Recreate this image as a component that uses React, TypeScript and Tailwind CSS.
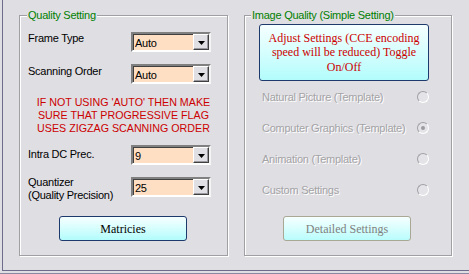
const sans = "font-['Liberation_Sans',Arial,sans-serif] text-[11px] tracking-[-0.25px]";
const serif = "font-['Liberation_Serif','Times_New_Roman',serif] text-[12px]";

const Combo = ({ value }: { value: string }) => (
  <div className="w-[80px] h-[20px] border-2 border-t-[#808080] border-l-[#808080] border-b-white border-r-[#f4f4f4] shadow-[inset_1px_1px_0_#404040] bg-[#ffdfc3] flex">
    <div className={`${sans} flex-1 pl-[2px] pt-[3px] leading-[13px] text-black`}>{value}</div>
    <div className="w-[16px] h-[16px] bg-[#e0dfe3] border border-t-white border-l-white border-b-[#404040] border-r-[#404040] shadow-[inset_-1px_-1px_0_#9a99a0] flex items-center justify-center">
      <svg width="7" height="4" viewBox="0 0 7 4" className="mt-[1px]">
        <path d="M0 0H7L3.5 4Z" fill="#000" />
      </svg>
    </div>
  </div>
);

const Row = ({ label, value, pt }: { label: React.ReactNode; value: string; pt: string }) => (
  <div className="flex items-start h-[20px]">
    <div className={`${sans} w-[103px] leading-[13px] text-black ${pt}`}>{label}</div>
    <Combo value={value} />
  </div>
);

const Radio = ({ label, checked }: { label: string; checked?: boolean }) => (
  <div className="flex items-center justify-between h-[20px] pl-[17px] pr-[22px]">
    <span className={`${sans} leading-[13px] text-[#a3a3a6] [text-shadow:1px_1px_0_#ffffff]`}>{label}</span>
    <div className="w-[12px] h-[12px] rounded-full border border-t-[#a0a0a4] border-l-[#a0a0a4] border-b-white border-r-white bg-[#e4e3e8] flex items-center justify-center">
      {checked && <div className="w-[4px] h-[4px] rounded-full bg-[#9c9ca0]" />}
    </div>
  </div>
);

const Group = ({ title, width, legendLeft, children }: { title: string; width: string; legendLeft: string; children: React.ReactNode }) => (
  <div className={`relative ${width} h-[241px] border border-[#a0a0a4] shadow-[inset_1px_1px_0_#fff,1px_1px_0_#fff] flex flex-col`}>
    <span className={`${sans} absolute top-[-7px] ${legendLeft} px-[1px] bg-[#dfdee3] leading-[13px] text-[#008000]`}>
      {title}
    </span>
    {children}
  </div>
);

export default function App() {
  return (
    <div className="w-[469px] h-[274px] bg-[#dfdee3] overflow-hidden flex flex-col">
      <div className="ml-[2px] h-[271px] border-l border-b border-[#6e6c8c] flex pl-[16px] pt-[15px]">
        <Group title="Quality Setting" width="w-[209px]" legendLeft="left-[7px]">
          <div className="pl-[8px] pt-[16px] flex flex-col">
            <Row label="Frame Type" value="Auto" pt="pt-0" />
            <div className="mt-[12px]">
              <Row label="Scanning Order" value="Auto" pt="pt-[1px]" />
            </div>
            <div className={`mt-[12px] -ml-[8px] font-['Liberation_Sans',Arial,sans-serif] text-[10.7px] leading-[13px] text-[#cc0000] text-center`}>
              IF NOT USING 'AUTO' THEN MAKE
              <br />
              SURE THAT PROGRESSIVE FLAG
              <br />
              USES ZIGZAG SCANNING ORDER
            </div>
            <div className="mt-[10px]">
              <Row label="Intra DC Prec." value="9" pt="pt-[3px]" />
            </div>
            <div className="mt-[12px]">
              <Row
                label={
                  <>
                    Quantizer
                    <br />
                    (Quality Precision)
                  </>
                }
                value="25"
                pt="-mt-[1px]"
              />
            </div>
            <button className="mt-[19px] ml-[31px] w-[128px] h-[25px] rounded-[3px] border border-[#1d3a6c] bg-linear-to-b from-[#f6ffff] to-[#b2fcfc] flex items-center justify-center">
              <span className={`${serif} text-black`}>Matricies</span>
            </button>
          </div>
        </Group>
        <div className="ml-[16px]">
          <Group title="Image Quality (Simple Setting)" width="w-[208px]" legendLeft="left-[6px]">
            <button className="mt-[8px] ml-[14px] w-[170px] h-[57px] rounded-[3px] border border-[#1d3a6c] bg-linear-to-b from-[#f6ffff] to-[#b2fcfc] flex items-center justify-center">
              <span className={`${serif} leading-[14.5px] text-[#cc0000] text-center`}>
                Adjust Settings (CCE encoding
                <br />
                speed will be reduced) Toggle
                <br />
                On/Off
              </span>
            </button>
            <div className="mt-[6px] flex flex-col gap-[11px]">
              <Radio label="Natural Picture (Template)" />
              <Radio label="Computer Graphics (Template)" checked />
              <Radio label="Animation (Template)" />
              <Radio label="Custom Settings" />
            </div>
            <button className="mt-[16px] ml-[38px] w-[128px] h-[25px] rounded-[3px] border border-[#a8a894] bg-linear-to-b from-[#f6ffff] to-[#b8fcfc] flex items-center justify-center">
              <span className={`${serif} text-[#808080]`}>Detailed Settings</span>
            </button>
          </Group>
        </div>
      </div>
      <div className="mt-[2px] h-px bg-[#8a88a2]" />
    </div>
  );
}
